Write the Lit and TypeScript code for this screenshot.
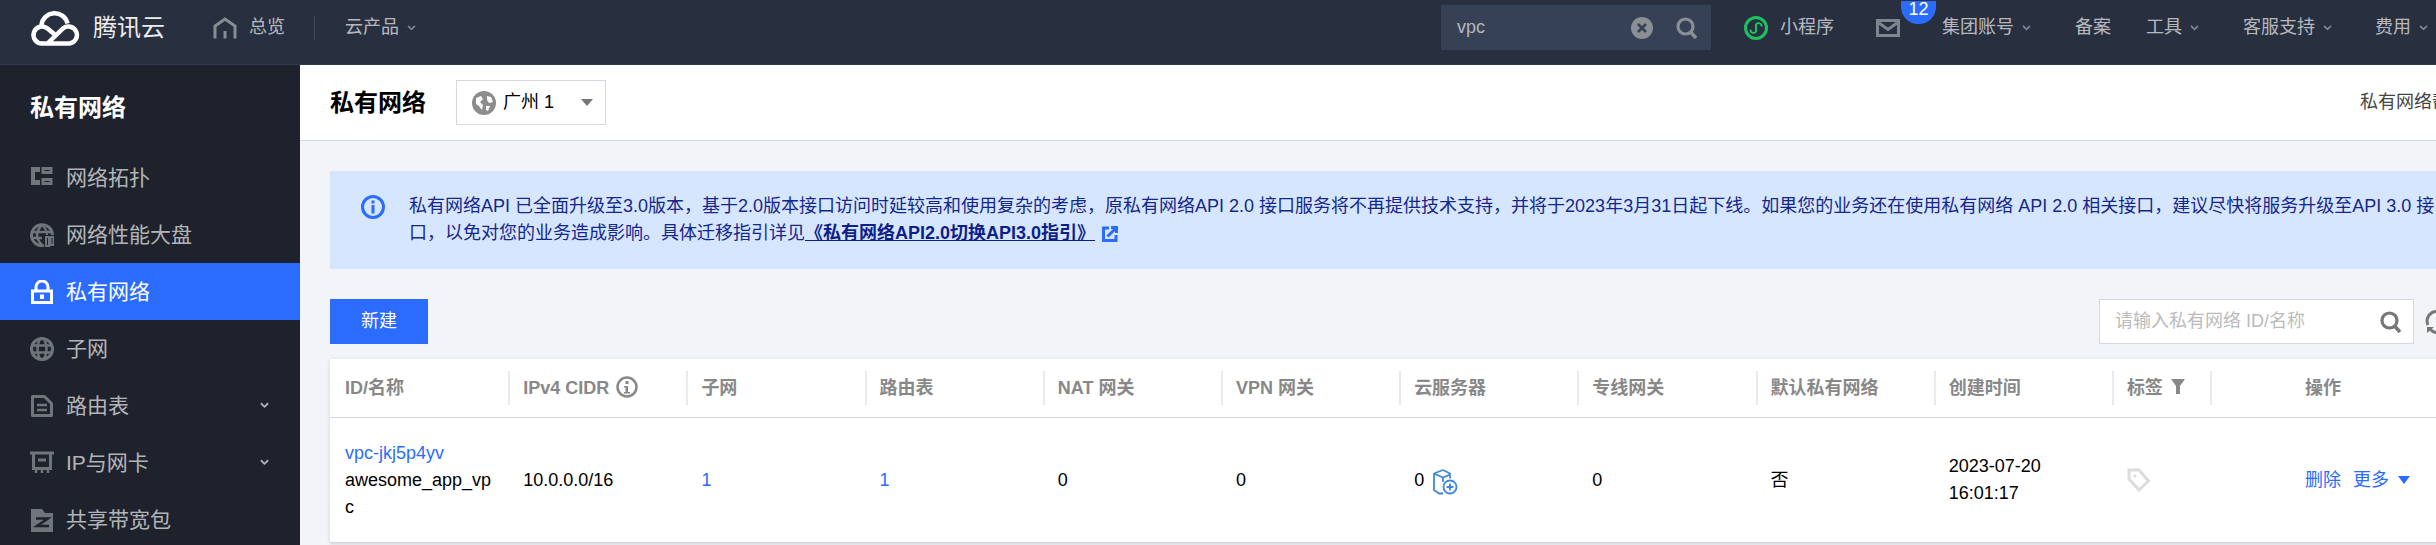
import { LitElement, html, css, svg } from "lit";
import { customElement } from "lit/decorators.js";

const chev = html`<svg class="chev" viewBox="0 0 10 7"><path d="M1 1l4 4 4-4" fill="none" stroke="currentColor" stroke-width="2"/></svg>`;

const sideIcons = {
  topo: svg`<path d="M1 1h9v5H5v8h5v5H1z" fill="currentColor"/><path d="M13 2.500h8v4h-8zM13 13.500h8v4h-8z" fill="none" stroke="currentColor" stroke-width="3"/>`,
  perf: svg`<path d="M14 22.500A10.500 10.500 0 1 1 22.500 12" fill="none" stroke="currentColor" stroke-width="3"/><path d="M12 2c-3 3-5 6-5 10s2 7 5 10M1 9h22M1 15h11" fill="none" stroke="currentColor" stroke-width="2.500"/><path d="M13 3c2 2 4 5 4 9M16 14h3v9h-3zM20.500 14h3v8h-3z" fill="none" stroke="currentColor" stroke-width="2"/>`,
  lock: svg`<path d="M6 11V7a6 6 0 0 1 12 0v4" fill="none" stroke="currentColor" stroke-width="3"/><rect x="2.500" y="11" width="19" height="11.500" fill="none" stroke="currentColor" stroke-width="3"/><rect x="10" y="14.500" width="4" height="4.500" fill="currentColor"/>`,
  globe: svg`<circle cx="12" cy="12" r="10.500" fill="none" stroke="currentColor" stroke-width="3"/><ellipse cx="12" cy="12" rx="4.500" ry="10.500" fill="none" stroke="currentColor" stroke-width="2.500"/><path d="M2 8.500h20M2 15.500h20" stroke="currentColor" stroke-width="2.500"/>`,
  doc: svg`<path d="M2.500 2.500h12l7 7v12h-19z" fill="none" stroke="currentColor" stroke-width="3" stroke-linejoin="round"/><path d="M7 11h10M7 16h10" stroke="currentColor" stroke-width="2.500"/>`,
  card: svg`<path d="M0 2h24" stroke="currentColor" stroke-width="3"/><path d="M3.500 2v15.500h17V2" fill="none" stroke="currentColor" stroke-width="3"/><path d="M8 9h8" stroke="currentColor" stroke-width="3"/><path d="M6 18v4M12 18v4M18 18v4" stroke="currentColor" stroke-width="2.500"/>`,
  box: svg`<path d="M1 1h11l3 4h8v19H1z" fill="currentColor"/><path d="M6 10.500h12L7 18h12" fill="none" stroke="#1e222d" stroke-width="2.500"/>`,
};

const menu: { label: string; icon: keyof typeof sideIcons; arrow?: boolean; active?: boolean }[] = [
  { label: "网络拓扑", icon: "topo" },
  { label: "网络性能大盘", icon: "perf" },
  { label: "私有网络", icon: "lock", active: true },
  { label: "子网", icon: "globe" },
  { label: "路由表", icon: "doc", arrow: true },
  { label: "IP与网卡", icon: "card", arrow: true },
  { label: "共享带宽包", icon: "box" },
];

const searchIcon = html`<svg class="search-ic" viewBox="0 0 22 22"><circle cx="9.500" cy="9.500" r="7.500" fill="none" stroke="currentColor" stroke-width="3.200"/><path d="M14.500 15l5.500 6" stroke="currentColor" stroke-width="3.600"/></svg>`;

@customElement("app-root")
export class AppRoot extends LitElement {
  static styles = css`
    :host { display: block; width: 2436px; height: 545px; overflow: hidden; background: #f2f4f8;
      font-family: "Liberation Sans", "Noto Sans CJK SC", sans-serif; font-size: 18px; color: #000; line-height: 27px; }
    svg { display: block; flex: none; }

    .top { height: 55px; padding-bottom: 9px; border-bottom: 1px solid #323b4d; background: #282f3f; display: flex; align-items: center;
      padding-left: 30px; color: rgba(255,255,255,.68); position: relative; }
    .logo { width: 50px; height: 36px; margin-right: 13px; }
    .brand { font-size: 24px; color: #ececec; }
    .home { width: 24px; height: 22px; margin: 0 12px 0 48px; color: #878d95; }
    .vline { width: 1px; height: 24px; background: #3f4757; margin: 0 30px 0 29px; }
    .chev { width: 9px; height: 6px; margin-left: 8px; color: #80868f; }
    .item { display: flex; align-items: center; white-space: nowrap; }
    .right { margin-left: auto; display: flex; align-items: center; padding-right: 8px; }
    .sbox { width: 270px; height: 45px; box-sizing: border-box; background: #364155; display: flex; align-items: center;
      padding: 0 13px 0 16px; color: #b5b8bd; margin-right: 33px; }
    .sbox .val { margin-right: auto; }
    .clear { width: 22px; height: 22px; margin-right: 23px; }
    .search-ic { width: 22px; height: 22px; color: #8a8f96; }
    .mini-ic { width: 24px; height: 24px; margin-right: 12px; }
    .mail { width: 24px; height: 18px; margin-left: 42px; position: relative; }
    .mail svg { width: 24px; height: 18px; }
    .badge { position: absolute; left: 25px; top: -18px; width: 35px; height: 23px; border-radius: 0 0 17px 17px; background: #2b6cff; color: #fff;
      text-align: center; line-height: 16px; font-size: 18px; }
    .n-group { margin-left: 42px; }
    .n-beian { margin-left: 44px; }
    .n-tools { margin-left: 35px; }
    .n-help { margin-left: 44px; }
    .n-fee { margin-left: 43px; }

    .layout { display: flex; height: 480px; }
    .side { width: 300px; flex: none; background: #1e222d; color: rgba(255,255,255,.68); }
    .side-title { height: 84px; display: flex; align-items: center; padding-left: 30px; font-size: 24px; font-weight: 700; color: #fff; }
    .mi { height: 57px; display: flex; align-items: center; padding-left: 30px; font-size: 21px; }
    .mi .ic { width: 24px; height: 24px; margin-right: 12px; color: #6e757c; }
    .mi.on { background: #2b6cff; color: #fff; }
    .mi.on .ic { color: #fff; }
    .mi .chev { margin-left: auto; margin-right: 31px; color: #b0b3b8; height: 7px; }

    .main { flex: 1; min-width: 0; overflow: hidden; }
    .head { width: 2174px; height: 75px; background: #fff; border-bottom: 1px solid #d3d8e3; display: flex; align-items: center; padding-left: 30px; }
    .head h1 { margin: 0 30px 0 0; font-size: 24px; font-weight: 700; color: #000; line-height: 32px; }
    .region { width: 150px; height: 45px; box-sizing: border-box; border: 1px solid #d3d8e3; display: flex; align-items: center; padding-left: 15px; color: #000; }
    .region svg.g { width: 24px; height: 24px; margin-right: 7px; }
    .region .car { width: 12px; height: 7px; margin-left: auto; margin-right: 12px; }
    .help { margin-left: auto; color: #444; white-space: nowrap; }

    .body { padding: 30px 0 0 30px; width: 2119px; }
    .notice { height: 98px; box-sizing: border-box; padding: 22px 0 22px 31px; background: #d5e6fe; display: flex; color: #16278c; white-space: nowrap; }
    .notice .i { width: 24px; height: 24px; margin: 2px 24px 0 0; }
    .notice a { color: #0f1f8a; font-weight: 700; text-decoration: underline; }
    .link-ic { display: inline-block; width: 16px; height: 16px; margin-left: 7px; vertical-align: -3px; }
    .bar { margin-top: 30px; display: flex; align-items: center; height: 45px; }
    .btn { width: 98px; height: 45px; background: #2b6cff; color: #fff; display: flex; align-items: center; justify-content: center; }
    .q { margin-left: auto; width: 315px; height: 45px; box-sizing: border-box; border: 1px solid #d3d8e3; background: #fff; display: flex; align-items: center;
      padding: 0 11px 0 15px; color: #bbb; white-space: nowrap; }
    .q .search-ic { margin-left: auto; color: #777; }
    .refresh { width: 24px; height: 24px; margin-left: 11px; color: #777; }

    .table { margin-top: 15px; background: #fff; box-shadow: 0 1px 4px rgba(54,58,80,.18); display: grid;
      grid-template-columns: repeat(11, 178.2px) 1fr; }
    .th { height: 58px; border-bottom: 1px solid #d3d8e3; display: flex; align-items: center; color: #888; font-weight: 700; white-space: nowrap; padding-left: 15px; }
    .th.s { padding-left: 0; }
    .sep { width: 2px; height: 34px; background: #e8eaef; margin-right: 13px; flex: none; }
    .th .tip { width: 22px; height: 22px; margin-left: 7px; margin-top: -3px; color: #888; }
    .th .fun { width: 14px; height: 15px; margin: -4px 0 0 8px; }
    .th .sep2 { margin: 0 0 0 25px; }
    .td { height: 125px; border-bottom: 1px solid #d3d8e3; display: flex; flex-direction: column; justify-content: center; align-items: flex-start;
      padding: 0 15px; box-sizing: border-box; min-width: 0; word-break: break-all; }
    .td.row { flex-direction: row; align-items: center; justify-content: flex-start; }
    .lnk { color: #2b6cff; }
    .cvm { width: 26px; height: 26px; margin: 4px 0 0 8px; }
    .tag { width: 24px; height: 24px; }
    .ops { gap: 12px; white-space: nowrap; }
    .ops .car { width: 12px; height: 8px; margin-left: -3px; }
  `;

  render() {
    const heads = ["路由表", "NAT 网关", "VPN 网关", "云服务器", "专线网关", "默认私有网络", "创建时间"];
    return html`
      <div class="top">
        <svg class="logo" viewBox="0 0 50 36" fill="none" stroke="#fff" stroke-width="4.500">
          <path d="M12 33.500H39.500A8.500 8.500 0 1 0 33 18.500L18 33"/>
          <path d="M12 33.500A8.500 8.500 0 1 1 17.500 18.500L26 25.500"/>
          <path d="M11.500 15A13.200 13.200 0 0 1 37.500 13.500"/>
        </svg>
        <span class="brand">腾讯云</span>
        <svg class="home" viewBox="0 0 24 22" fill="none" stroke="currentColor" stroke-width="3">
          <path d="M2 21.500V9L12 2l10 7v12.500"/><path d="M12 14v7.500"/>
        </svg>
        <span>总览</span>
        <span class="vline"></span>
        <span class="item">云产品${chev}</span>
        <div class="right">
          <div class="sbox">
            <span class="val">vpc</span>
            <svg class="clear" viewBox="0 0 22 22"><circle cx="11" cy="11" r="11" fill="#8a8f96"/><path d="M7 7l8 8M15 7l-8 8" stroke="#364155" stroke-width="2.500"/></svg>
            ${searchIcon}
          </div>
          <span class="item">
            <svg class="mini-ic" viewBox="0 0 24 24" fill="none" stroke="#1ec15f"><circle cx="12" cy="12" r="10.500" stroke-width="3"/><path d="M6.500 13.500v1a3 3 0 0 0 5.500 1V8.500a3 3 0 0 1 5.500 1v1" stroke-width="2"/></svg>
            小程序
          </span>
          <div class="mail">
            <svg viewBox="0 0 24 18"><rect width="24" height="18" fill="#7f858c"/><rect x="3" y="3" width="18" height="12" fill="#282f3f"/><path d="M3 4l9 6.500L21 4" fill="none" stroke="#7f858c" stroke-width="3"/></svg>
            <span class="badge">12</span>
          </div>
          <span class="item n-group">集团账号${chev}</span>
          <span class="item n-beian">备案</span>
          <span class="item n-tools">工具${chev}</span>
          <span class="item n-help">客服支持${chev}</span>
          <span class="item n-fee">费用${chev}</span>
        </div>
      </div>
      <div class="layout">
        <nav class="side">
          <div class="side-title">私有网络</div>
          ${menu.map(m => html`
            <div class="mi ${m.active ? "on" : ""}">
              <svg class="ic" viewBox="0 0 24 24">${sideIcons[m.icon]}</svg>
              <span>${m.label}</span>
              ${m.arrow ? chev : ""}
            </div>`)}
        </nav>
        <main class="main">
          <div class="head">
            <h1>私有网络</h1>
            <div class="region">
              <svg class="g" viewBox="0 0 24 24"><circle cx="12" cy="12" r="12" fill="#8d8d8d"/><path d="M4 7l5-2 2 3-3 3 3 3-1 5-3-4-3-2zM15 5l4 1 2 5-4 1-2-3zM14 15l4 0-2 5-2-1z" fill="#fff"/></svg>
              <span>广州 1</span>
              <svg class="car" viewBox="0 0 12 7"><path d="M0 0h12L6 7z" fill="#777"/></svg>
            </div>
            <span class="help">私有网络帮助文档</span>
          </div>
          <div class="body">
            <div class="notice">
              <svg class="i" viewBox="0 0 24 24"><circle cx="12" cy="12" r="10.500" fill="none" stroke="#2b6cff" stroke-width="3"/><rect x="10.500" y="5.500" width="3" height="3" fill="#2b6cff"/><rect x="10.500" y="10" width="3" height="8.500" fill="#2b6cff"/></svg>
              <div>
                <div>私有网络API 已全面升级至3.0版本，基于2.0版本接口访问时延较高和使用复杂的考虑，原私有网络API 2.0 接口服务将不再提供技术支持，并将于2023年3月31日起下线。如果您的业务还在使用私有网络 API 2.0 相关接口，建议尽快将服务升级至API 3.0 接</div>
                <div>口，以免对您的业务造成影响。具体迁移指引详见<a>《私有网络API2.0切换API3.0指引》</a><svg class="link-ic" viewBox="0 0 16 16" fill="none" stroke="#2b6cff" stroke-width="3"><path d="M7 2H1.500v12.500H14V9"/><path d="M5.500 10.500L14 2M9 1.500h5.500V7"/></svg></div>
              </div>
            </div>
            <div class="bar">
              <div class="btn">新建</div>
              <div class="q">
                <span>请输入私有网络 ID/名称</span>
                ${searchIcon}
              </div>
              <svg class="refresh" viewBox="0 0 24 24" fill="none" stroke="currentColor" stroke-width="3"><path d="M3 15A9.500 9.500 0 0 1 19 5"/><path d="M21 9a9.500 9.500 0 0 1-16 10"/><path d="M15 7h7V1z M9 17H2v6z" fill="currentColor" stroke="none"/></svg>
            </div>
            <div class="table">
              <div class="th">ID/名称</div>
              <div class="th s"><span class="sep"></span>IPv4 CIDR<svg class="tip" viewBox="0 0 22 22"><circle cx="11" cy="11" r="9.500" fill="none" stroke="currentColor" stroke-width="2.500"/><rect x="9.500" y="5" width="3" height="3" fill="currentColor"/><path d="M8 10h4v6h2v1.500H8V16h1.500v-4.500H8z" fill="currentColor"/></svg></div>
              <div class="th s"><span class="sep"></span>子网</div>
              ${heads.map(h => html`<div class="th s"><span class="sep"></span>${h}</div>`)}
              <div class="th s"><span class="sep"></span>标签<svg class="fun" viewBox="0 0 14 15"><path d="M0 0h14L9 7v8H5V7z" fill="#888"/></svg><span class="sep sep2"></span></div>
              <div class="th">操作</div>

              <div class="td"><span class="lnk">vpc-jkj5p4yv</span><span>awesome_app_vpc</span></div>
              <div class="td">10.0.0.0/16</div>
              <div class="td lnk">1</div>
              <div class="td lnk">1</div>
              <div class="td">0</div>
              <div class="td">0</div>
              <div class="td row">0<svg class="cvm" viewBox="0 0 26 26" fill="none" stroke="#3f87dd" stroke-width="1.800"><path d="M11 1l7 3.500v5M11 1L2 4.500V21l5 3.500h4M2 4.500l9 4 7-3M11 8.500V13"/><circle cx="18" cy="18" r="6.500"/><path d="M14.500 18h7M18 14.500v7"/></svg></div>
              <div class="td">0</div>
              <div class="td">否</div>
              <div class="td"><span>2023-07-20</span><span>16:01:17</span></div>
              <div class="td"><svg class="tag" viewBox="0 0 24 24" fill="none" stroke="#dcdcdc" stroke-width="3"><path d="M2 2h10l9.500 11-9.500 9-10-11z"/><circle cx="8" cy="8" r="1.500" fill="#dcdcdc" stroke="none"/></svg></div>
              <div class="td row ops lnk"><span>删除</span><span>更多</span><svg class="car" viewBox="0 0 12 8"><path d="M0 0h12L6 8z" fill="#2b6cff"/></svg></div>
            </div>
          </div>
        </main>
      </div>
    `;
  }
}
